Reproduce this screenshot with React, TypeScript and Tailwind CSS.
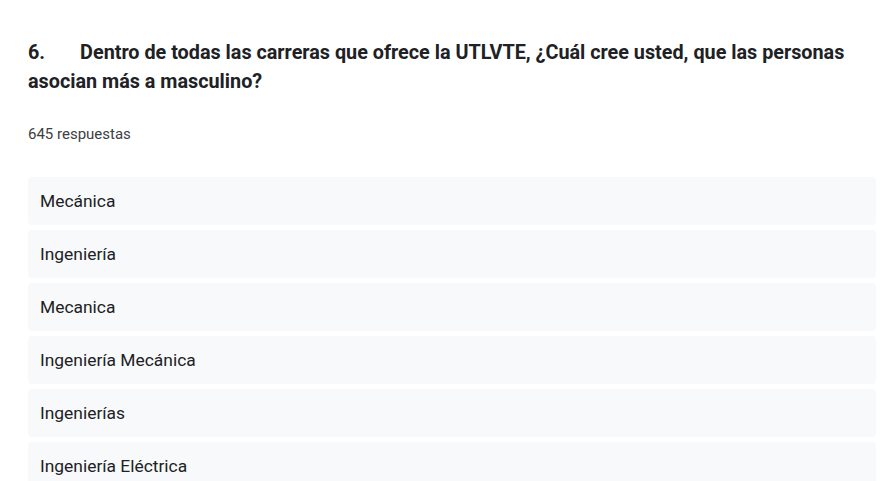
import React from "react";

const items = [
  "Mecánica",
  "Ingeniería",
  "Mecanica",
  "Ingeniería Mecánica",
  "Ingenierías",
  "Ingeniería Eléctrica",
  "Ingeniería Industrial",
];

export default function App() {
  return (
    <div
      className="w-[887px] h-[481px] overflow-hidden bg-white pl-[28px] pr-[11px] pt-[38px]"
      style={{ fontFamily: "Roboto, 'Liberation Sans', sans-serif" }}
    >
      <h1 className="text-[19.8px] leading-[29px] font-bold text-[#202124]">
        <span className="mr-[35px]">6.</span>
        Dentro de todas las carreras que ofrece la UTLVTE, ¿Cuál cree usted, que las personas asocian más a masculino?
      </h1>
      <div className="mt-[28px] text-[15px] leading-[20px] text-[#3c4043]">645 respuestas</div>
      <div className="mt-[33px] flex flex-col gap-[5px]">
        {items.map((t) => (
          <div
            key={t}
            className="h-[48px] shrink-0 flex items-center rounded-[4px] bg-[#f8f9fa] px-[12px] text-[17.4px] text-[#202124]"
          >
            {t}
          </div>
        ))}
      </div>
    </div>
  );
}
